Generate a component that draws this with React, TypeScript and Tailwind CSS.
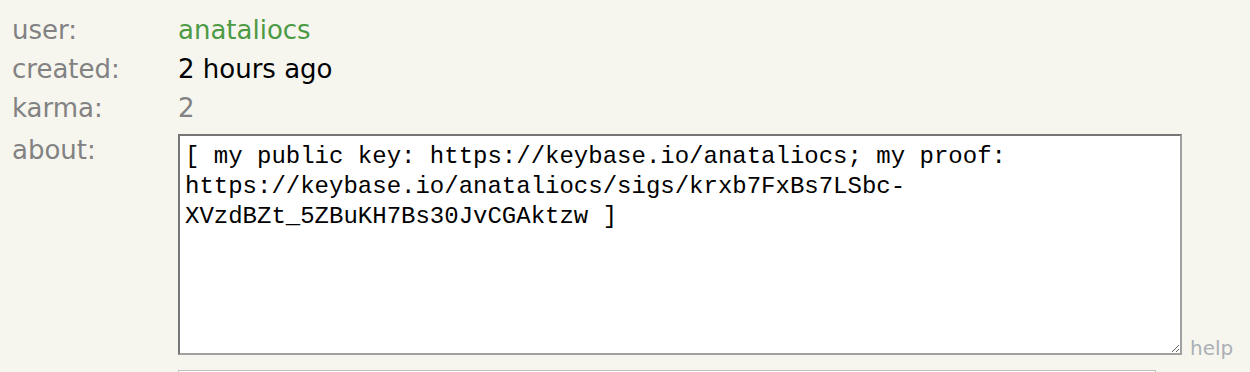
const about =
  "[ my public key: https://keybase.io/anataliocs; my proof:\nhttps://keybase.io/anataliocs/sigs/krxb7FxBs7LSbc-\nXVzdBZt_5ZBuKH7Bs30JvCGAktzw ]";

function Row({ label, children }: { label: string; children: React.ReactNode }) {
  return (
    <div className="flex h-[39px]">
      <div className="w-[166px] flex-none">{label}</div>
      <div>{children}</div>
    </div>
  );
}

export default function App() {
  return (
    <div className="min-h-screen bg-[#f6f6ef] pl-[12px] pt-[11px] font-['DejaVu_Sans','Verdana',sans-serif] text-[26px] leading-[39px] text-[#828282]">
      <Row label="user:">
        <a href="#" className="text-[#4d9a45]">
          anataliocs
        </a>
      </Row>
      <Row label="created:">
        <span className="text-black">2 hours ago</span>
      </Row>
      <Row label="karma:">
        <span>2</span>
      </Row>

      <div className="flex">
        <div className="w-[166px] flex-none pt-[3px]">about:</div>
        <div className="mt-[6px] flex items-end gap-[8px]">
          <textarea
            readOnly
            defaultValue={about}
            className="h-[221px] w-[1004px] border-2 border-t-[#767676] border-l-[#767676] border-r-[#a0a0a0] border-b-[#a0a0a0] bg-white px-[5px] pt-[6px] font-['Liberation_Mono','Courier_New',monospace] text-[24px] leading-[30px] text-black outline-none"
          />
          <a href="#" className="mb-[-3px] text-[20px] leading-[20px] text-[#aab0b5]">
            help
          </a>
        </div>
      </div>

      {/* next field, only its top edge is in view */}
      <div className="mt-[15px] flex">
        <div className="w-[166px] flex-none" />
        <input
          type="text"
          className="h-[40px] w-[978px] border border-[#c0c0c0] bg-white"
        />
      </div>
    </div>
  );
}
